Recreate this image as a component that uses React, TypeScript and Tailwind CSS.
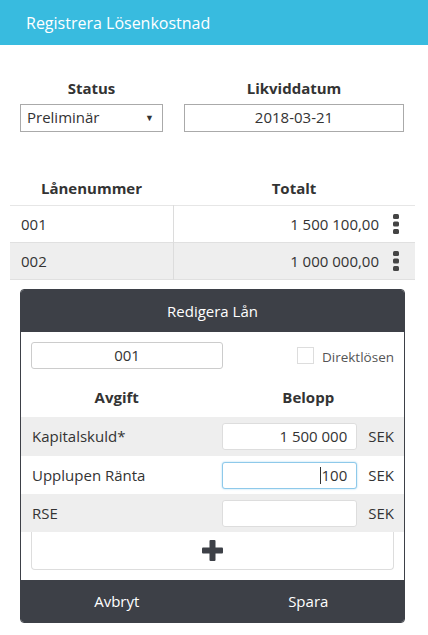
const font = { fontFamily: '"Open Sans", "Noto Sans", Arial, sans-serif' };

function Dots() {
  return (
    <svg width="8" height="22" viewBox="0 0 8 22" className="text-[#444]">
      <rect x="1" y="1" width="6" height="5" rx="1.5" fill="currentColor" />
      <rect x="1" y="8.5" width="6" height="5" rx="1.5" fill="currentColor" />
      <rect x="1" y="16" width="6" height="5" rx="1.5" fill="currentColor" />
    </svg>
  );
}

function PlusIcon() {
  return (
    <svg width="21" height="21" viewBox="0 0 21 21" className="text-[#3d4047]">
      <rect x="7.5" y="0" width="6" height="21" rx="1" fill="currentColor" />
      <rect x="0" y="7.5" width="21" height="6" rx="1" fill="currentColor" />
    </svg>
  );
}

const loans = [
  { id: "001", total: "1 500 100,00" },
  { id: "002", total: "1 000 000,00" },
];

const fees = [
  { name: "Kapitalskuld*", value: "1 500 000", gray: true, h: "h-[39px]" },
  { name: "Upplupen Ränta", value: "100", gray: false, focus: true, h: "h-[38px]" },
  { name: "RSE", value: "", gray: true, h: "h-[38px]" },
];

export default function App() {
  return (
    <div className="min-h-[635px] bg-white text-[#333]" style={font}>
      <header className="flex h-[45px] items-center bg-[#38bbdf] pl-[26px] text-[16px] text-white">
        Registrera Lösenkostnad
      </header>

      <div className="mt-[32px] grid grid-cols-[143px_220px] gap-x-[21px] px-[20px]">
        <p className="text-center text-[15px] font-bold">Status</p>
        <p className="text-center text-[15px] font-bold">Likviddatum</p>
        <div className="mt-[4px] flex h-[28px] items-center justify-between border border-[#aaa] pl-[6px] pr-[8px] text-[15px]">
          <span>Preliminär</span>
          <span className="text-[9px]">▼</span>
        </div>
        <div className="mt-[4px] flex h-[28px] items-center justify-center border border-[#aaa] text-[15px]">
          2018-03-21
        </div>
      </div>

      <table className="mx-[10px] mt-[40px] w-[405px] border-collapse text-[15px]">
        <thead>
          <tr className="h-[34px] border-b border-[#e6e6e6]">
            <th className="w-[163px] text-center font-bold">Lånenummer</th>
            <th className="text-center font-bold">Totalt</th>
          </tr>
        </thead>
        <tbody>
          {loans.map((l, i) => (
            <tr
              key={l.id}
              className={`h-[37px] border-b border-[#e0e0e0] ${i % 2 ? "bg-[#eeeeee]" : ""}`}
            >
              <td className="border-r border-[#dcdcdc] pl-[11px]">{l.id}</td>
              <td>
                <div className="flex items-center justify-end gap-[13px] pr-[15px]">
                  <span>{l.total}</span>
                  <Dots />
                </div>
              </td>
            </tr>
          ))}
        </tbody>
      </table>

      <section className="ml-[20px] mt-[9px] w-[385px] overflow-hidden rounded-[4px] border border-[#3d4047]">
        <div className="flex h-[42px] items-center justify-center bg-[#3d4047] text-[15px] text-white">
          Redigera Lån
        </div>
        <div className="flex items-center justify-between pl-[10px] pr-[10px] pt-[10px]">
          <div className="flex h-[27px] w-[192px] items-center justify-center rounded-[3px] border border-[#ccc] text-[15px]">
            001
          </div>
          <label className="flex items-center gap-[8px] text-[13.5px] text-[#555]">
            <span className="h-[17px] w-[17px] border border-[#ddd]" />
            <span className="mt-[3px]">Direktlösen</span>
          </label>
        </div>
        <div className="grid h-[48px] grid-cols-2 items-end pb-[9px] text-[15px] font-bold">
          <p className="text-center">Avgift</p>
          <p className="text-center">Belopp</p>
        </div>
        {fees.map((f) => (
          <div
            key={f.name}
            className={`flex ${f.h} items-center pl-[11px] pr-[10px] text-[15px] ${f.gray ? "bg-[#eeeeee]" : "bg-white"}`}
          >
            <span className="flex-1">{f.name}</span>
            <div
              className={`flex h-[27px] w-[135px] items-center justify-end rounded-[3px] border bg-white pr-[9px] ${f.focus ? "border-[#8ec9ea] shadow-[0_0_2px_#9fd3f0]" : "border-[#ddd]"}`}
            >
              {f.focus ? <span className="mr-[1px] h-[17px] w-px bg-[#333]" /> : null}
              {f.value}
            </div>
            <span className="ml-[11px]">SEK</span>
          </div>
        ))}
        <div className="mx-[10px] flex h-[38px] items-center justify-center rounded-b-[4px] border border-t-0 border-[#ddd]">
          <PlusIcon />
        </div>
        <div className="mt-[10px] grid h-[42px] grid-cols-2 items-center bg-[#3d4047] text-[15px] text-white">
          <p className="text-center">Avbryt</p>
          <p className="text-center">Spara</p>
        </div>
      </section>
    </div>
  );
}
